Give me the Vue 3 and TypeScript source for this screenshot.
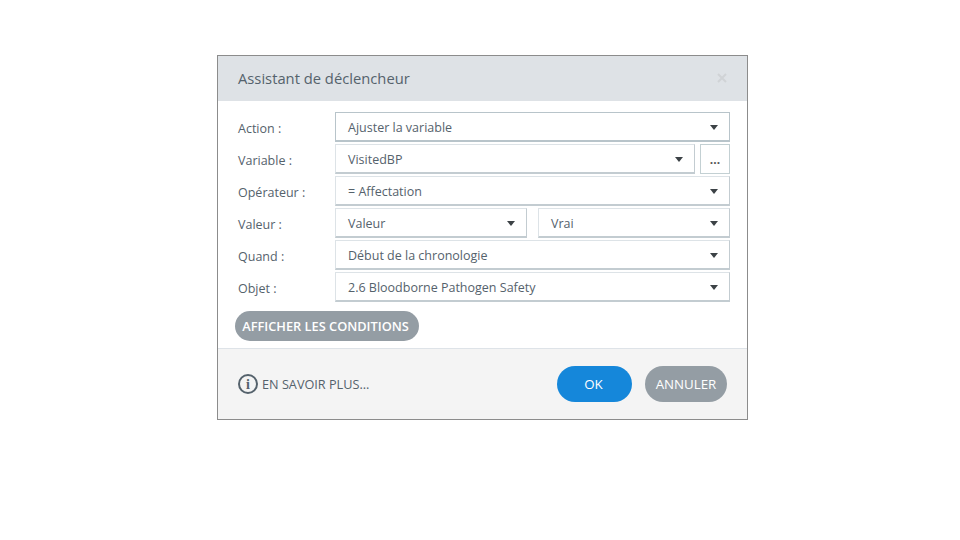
<script setup lang="ts">
interface Row { label: string; value: string }
const rows: Row[] = [
  { label: 'Action :', value: 'Ajuster la variable' },
  { label: 'Variable :', value: 'VisitedBP' },
  { label: 'Opérateur :', value: '= Affectation' },
  { label: 'Valeur :', value: 'Valeur' },
  { label: 'Quand :', value: 'Début de la chronologie' },
  { label: 'Objet :', value: '2.6 Bloodborne Pathogen Safety' },
]
</script>

<template>
  <div class="page">
    <section class="dialog">
      <header class="head">
        <h1 class="title">Assistant de déclencheur</h1>
        <svg class="close" width="10" height="10" viewBox="0 0 10 10"><path d="M1 1l8 8M9 1l-8 8" stroke="#d0d3d6" stroke-width="2" fill="none" /></svg>
      </header>
      <div class="body">
        <div v-for="(r, i) in rows" :key="r.label" class="row">
          <span class="label">{{ r.label }}</span>
          <div class="fields" :class="{ tight: i === 1 }">
            <div class="field" :class="{ active: i === 0 }">
              <span class="value">{{ r.value }}</span><i class="caret"></i>
            </div>
            <div v-if="i === 3" class="field">
              <span class="value">Vrai</span><i class="caret"></i>
            </div>
            <div v-if="i === 1" class="more">...</div>
          </div>
        </div>
        <button class="pill cond">AFFICHER LES CONDITIONS</button>
      </div>
      <footer class="foot">
        <div class="learn">
          <svg width="20" height="20" viewBox="0 0 20 20">
            <circle cx="10" cy="10" r="9" fill="none" stroke="#55626c" stroke-width="2" />
            <text x="10" y="15" text-anchor="middle" class="i">i</text>
          </svg>
          <span>EN SAVOIR PLUS...</span>
        </div>
        <div class="actions">
          <button class="pill big ok">OK</button>
          <button class="pill big cancel">ANNULER</button>
        </div>
      </footer>
    </section>
  </div>
</template>

<style>
html, body { margin: 0; background: #fff; }
</style>

<style scoped>
.page {
  width: 960px;
  height: 540px;
  box-sizing: border-box;
  padding: 55px 0 0 217px;
  font-family: "Open Sans", "Noto Sans", sans-serif;
  color: #55626c;
}
.dialog {
  width: 531px;
  height: 365px;
  box-sizing: border-box;
  border: 1px solid #8c8c8c;
  display: flex;
  flex-direction: column;
  background: #fff;
}
.head {
  height: 45px;
  flex: none;
  box-sizing: border-box;
  background: #dee2e6;
  display: flex;
  align-items: center;
  justify-content: space-between;
  padding: 0 20px 2px;
}
.title {
  margin: 0;
  font-size: 14.75px;
  font-weight: 400;
  color: #55626c;
}
.close { margin-top: 1px; }
.body {
  flex: 1;
  padding: 11px 17px 0 20px;
}
.row {
  display: flex;
  height: 30px;
  margin-bottom: 2px;
  align-items: center;
}
.label {
  width: 97px;
  flex: none;
  font-size: 12.5px;
  padding-top: 3px;
}
.fields {
  flex: 1;
  display: flex;
  gap: 11px;
  height: 100%;
  min-width: 0;
}
.fields.tight { gap: 5px; }
.field {
  flex: 1;
  display: flex;
  align-items: center;
  justify-content: space-between;
  box-sizing: border-box;
  padding: 2px 11px 0 12px;
  border: 1px solid #dde3e7;
  border-bottom: 2px solid #c3ccd1;
  border-right-color: #c3ccd1;
  font-size: 12.5px;
}
.field.active { border-color: #b8c4ca; }
.caret {
  width: 0;
  height: 0;
  margin-top: -1px;
  border-left: 4.5px solid transparent;
  border-right: 4.5px solid transparent;
  border-top: 5px solid #3c4246;
}
.more {
  flex: none;
  width: 30px;
  box-sizing: border-box;
  border: 1px solid #c3d0d3;
  font-size: 12px;
  text-align: center;
  line-height: 30px;
  color: #555;
  font-weight: 700;
}
.pill {
  border: none;
  border-radius: 18px;
  font-family: inherit;
  color: #fff;
  background: #949da4;
  padding: 0;
}
.cond {
  display: block;
  width: 184px;
  height: 30px;
  margin: 9px 0 0 -3px;
  padding-right: 3px;
  font-size: 12.8px;
  font-weight: 600;
}
.foot {
  height: 71px;
  flex: none;
  box-sizing: border-box;
  background: #f4f4f4;
  border-top: 1px solid #dee3e8;
  display: flex;
  align-items: center;
  justify-content: space-between;
  padding: 0 20px;
}
.learn {
  display: flex;
  align-items: center;
  gap: 4px;
  font-size: 12.7px;
}
.i {
  font-family: "Liberation Serif", serif;
  font-size: 14px;
  font-weight: 700;
  fill: #55626c;
}
.actions { display: flex; gap: 13px; }
.big {
  height: 36px;
  font-size: 13.3px;
  font-weight: 400;
  padding-bottom: 1px;
}
.ok { width: 75px; background: #1587da; padding-right: 2px; }
.cancel { width: 82px; }
</style>
